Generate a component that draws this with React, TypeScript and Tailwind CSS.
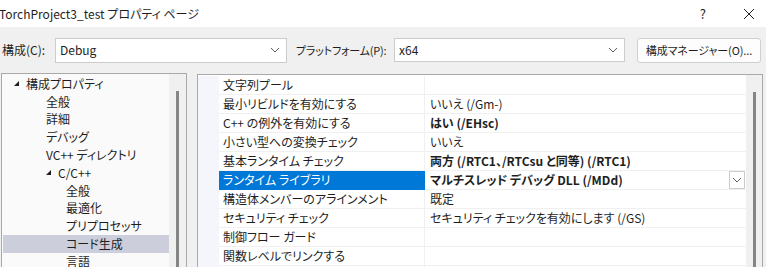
import React from 'react';

const font = "[font-family:'Noto_Sans_CJK_JP','Noto_Sans',sans-serif] [font-feature-settings:'palt']";

function Chevron({ className }: { className?: string }) {
  return (
    <svg width="10" height="6" viewBox="0 0 10 6" className={className}>
      <polyline points="1,1 5,5 9,1" fill="none" stroke="#5f5f5f" strokeWidth="1" />
    </svg>
  );
}

function Expander() {
  return (
    <svg width="7" height="7" viewBox="0 0 7 7" className="shrink-0">
      <polygon points="6,1 6,6 1,6" fill="#1e1e1e" />
    </svg>
  );
}

const tree: { label: string; level: number; open?: boolean; selected?: boolean }[] = [
  { label: '構成プロパティ', level: 0, open: true },
  { label: '全般', level: 1 },
  { label: '詳細', level: 1 },
  { label: 'デバッグ', level: 1 },
  { label: 'VC++ ディレクトリ', level: 1 },
  { label: 'C/C++', level: 1, open: true },
  { label: '全般', level: 2 },
  { label: '最適化', level: 2 },
  { label: 'プリプロセッサ', level: 2 },
  { label: 'コード生成', level: 2, selected: true },
  { label: '言語', level: 2 },
];

const rows: { name: string; value: string; bold?: boolean; selected?: boolean }[] = [
  { name: '文字列プール', value: '' },
  { name: '最小リビルドを有効にする', value: 'いいえ (/Gm-)' },
  { name: 'C++ の例外を有効にする', value: 'はい (/EHsc)', bold: true },
  { name: '小さい型への変換チェック', value: 'いいえ' },
  { name: '基本ランタイム チェック', value: '両方 (/RTC1、/RTCsu と同等) (/RTC1)', bold: true },
  { name: 'ランタイム ライブラリ', value: 'マルチスレッド デバッグ DLL (/MDd)', bold: true, selected: true },
  { name: '構造体メンバーのアラインメント', value: '既定' },
  { name: 'セキュリティ チェック', value: 'セキュリティ チェックを有効にします (/GS)' },
  { name: '制御フロー ガード', value: '' },
  { name: '関数レベルでリンクする', value: '' },
  { name: '', value: '' },
];

const indent = ['pl-[11px]', 'pl-[43px]', 'pl-[63px]'];

export default function App() {
  return (
    <div className={`w-[766px] h-[267px] overflow-hidden bg-[#f0f0f0] text-[12px] text-[#1e1e1e] flex flex-col ${font}`}>
      {/* title bar */}
      <div className="h-[27px] shrink-0 bg-white flex items-center">
        <span className="ml-[-1px] leading-none whitespace-nowrap">TorchProject3_test プロパティ ページ</span>
        <span className="ml-auto mr-[37px] text-[13px] leading-none">?</span>
        <svg width="12" height="12" viewBox="0 0 12 12" className="mr-[11px]">
          <path d="M1 1 L11 11 M11 1 L1 11" stroke="#1e1e1e" strokeWidth="1" />
        </svg>
      </div>

      {/* toolbar */}
      <div className="h-[46px] shrink-0 flex items-center">
        <span className="ml-[2px] w-[53px] whitespace-nowrap">構成(C):</span>
        <div className="w-[232px] h-[25px] bg-white border border-[#cccccc] flex items-center pl-[4px] pr-[6px]">
          <span>Debug</span>
          <Chevron className="ml-auto" />
        </div>
        <span className="ml-[9px] w-[98px] whitespace-nowrap text-[11px] tracking-[-0.2px]">プラットフォーム(P):</span>
        <div className="w-[231px] h-[24px] bg-white border border-[#cccccc] flex items-center pl-[4px] pr-[6px]">
          <span>x64</span>
          <Chevron className="ml-auto" />
        </div>
        <button className="ml-[12px] w-[124px] h-[25px] bg-[#fdfdfd] border border-[#d0d0d0] rounded-[3px] flex items-center justify-center whitespace-nowrap text-[11px] tracking-[-0.1px]">
          構成マネージャー(O)...
        </button>
      </div>

      {/* content */}
      <div className="flex-1 flex min-h-0">
        {/* tree panel */}
        <div className="ml-[1px] w-[186px] border border-[#a9a9a9] border-b-0 bg-[#fafafa] flex">
          <div className="flex-1 pt-[1px] pl-[1px]">
            {tree.map((t, i) => (
              <div
                key={i}
                className={`h-[17.8px] flex items-center whitespace-nowrap ${indent[t.level]} ${t.selected ? 'bg-[#cccedb]' : ''}`}
              >
                {t.open ? (
                  <span className="flex items-center gap-[6px] ml-[-1px]">
                    <Expander />
                    <span className="leading-none">{t.label}</span>
                  </span>
                ) : (
                  <span className="leading-none">{t.label}</span>
                )}
              </div>
            ))}
          </div>
          <div className="w-[17px] bg-[#f0f0f0] flex justify-center pt-[17px]">
            <div className="w-[3px] h-full bg-[#858585]" />
          </div>
        </div>

        {/* property grid */}
        <div className="ml-[10px] mt-[1px] w-[566px] border border-[#a9a9a9] border-b-0 bg-white flex">
          <div className="flex-1 pt-[1px] flex flex-col">
            {rows.map((r, i) => (
              <div key={i} className="h-[19px] shrink-0 flex">
                <div className="w-[21px] bg-[#f5f6fb]" />
                <div
                  className={`w-[206px] flex items-center pl-[4px] border-b border-r ${
                    r.selected ? 'bg-[#0078d7] text-white border-[#0078d7]' : 'border-[#f0f0f0]'
                  }`}
                >
                  <span className="leading-none whitespace-nowrap">{r.name}</span>
                </div>
                <div className="flex-1 flex items-center pl-[5px] border-b border-[#f0f0f0]">
                  <span className={`leading-none whitespace-nowrap ${r.bold ? 'font-semibold' : ''}`}>{r.value}</span>
                  {r.selected && (
                    <div className="ml-auto mr-[1px] w-[16px] h-[18px] border border-[#cccccc] flex items-center justify-center bg-white">
                      <Chevron />
                    </div>
                  )}
                </div>
              </div>
            ))}
          </div>
          <div className="w-[16px] bg-[#f0f0f0] flex justify-center pt-[17px]">
            <div className="w-[3px] h-full bg-[#858585]" />
          </div>
        </div>
      </div>
    </div>
  );
}
